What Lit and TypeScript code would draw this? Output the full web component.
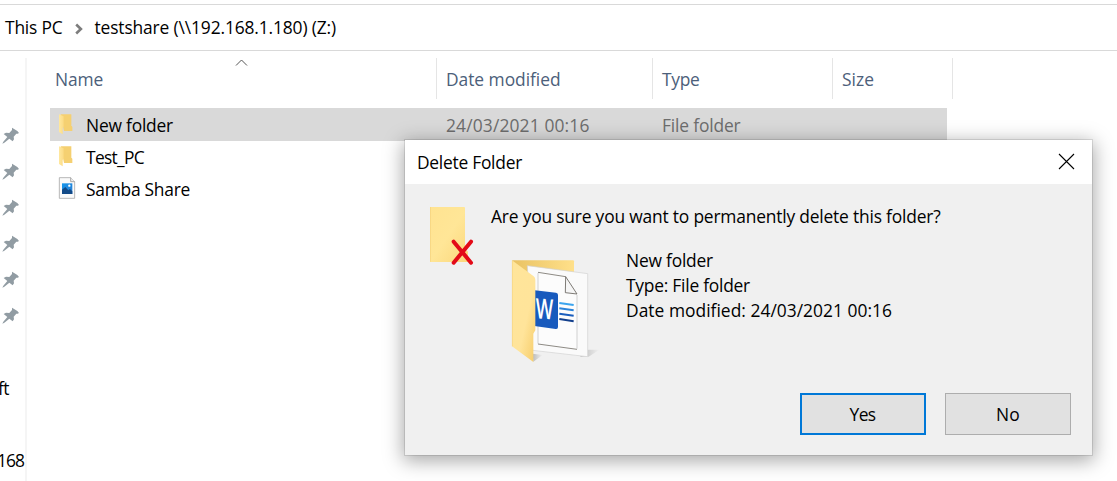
import { LitElement, html, css } from "lit";
import { customElement, property, query } from "lit/decorators.js";

/* A single line of text tracked so that it fills a known advance width. */
@customElement("ui-label")
class UiLabel extends LitElement {
  static styles = css`
    :host { display: block; white-space: pre; height: 24px; line-height: 24px; }
    .t { display: inline-block; }
  `;
  @property() text = "";
  @property({ type: Number }) fit = 0;
  @query(".t") span!: HTMLElement;
  updated() {
    const el = this.span;
    el.style.letterSpacing = "0px";
    if (!this.fit) return;
    const w = el.getBoundingClientRect().width;
    el.style.letterSpacing = `${(this.fit - w) / this.text.length}px`;
  }
  render() {
    return html`<span class="t">${this.text}</span>`;
  }
}

const label = (text: string, fit = 0) => html`<ui-label .text=${text} .fit=${fit}></ui-label>`;

const pin = html`<svg class="pin" viewBox="0 0 54 54" width="18" height="18">
  <path fill="#919ca3" d="M33 2 L38 5 L49 12 L54 18 L50 20 L46 20 L38 29 L39 37 L35 43 L25 35 L10 47 L4 50 L7 44 L19 30 L8 21 L15 17 L25 18 L33 9 Z"/>
</svg>`;

const folder = html`<svg viewBox="0 0 54 66" width="18" height="22">
  <defs><linearGradient id="s" x1="0" x2="1"><stop offset="0" stop-color="#ffe89f"/><stop offset="1" stop-color="#fbda83"/></linearGradient></defs>
  <path fill="#f5d071" d="M8 4 H40 V38 L43 41 V54 H18 Z"/>
  <path fill="url(#s)" d="M3 4 L17 10 V40 L14 45 V64 L3 57 Z"/>
</svg>`;

const picture = html`<svg viewBox="0 0 54 66" width="18" height="22">
  <defs><linearGradient id="p" x1="0" x2="1" y1="0" y2="1"><stop offset="0" stop-color="#1496ec"/><stop offset="1" stop-color="#2a7bd0"/></linearGradient></defs>
  <path fill="#fafafa" stroke="#aaa" stroke-width="2.5" d="M4 2 H38 L50 14 V64 H4 Z"/>
  <path fill="#eee" stroke="#999" stroke-width="2.5" d="M38 2 V14 H50"/>
  <path fill="url(#p)" d="M12 19 H43 V51 H12 Z"/>
  <path fill="#124a87" d="M12 38 L22 30 L31 40 L36 36 L43 43 V51 H12 Z"/>
  <circle cx="34" cy="26" r="3.5" fill="#fff"/>
</svg>`;

const deleteIcon = html`<svg viewBox="0 0 135 180" width="45" height="60">
  <defs><linearGradient id="d" x1="0" x2="1" y1="0" y2="1"><stop offset="0" stop-color="#ffe391"/><stop offset=".5" stop-color="#ffe697"/><stop offset="1" stop-color="#fbd77c"/></linearGradient></defs>
  <path fill="url(#d)" d="M0 3 H102 Q105 3 105 6 V128 L114 137 V168 H0 Z"/>
  <path fill="none" stroke="#f1cf78" stroke-width="2" d="M1 3 V167"/>
  <path fill="none" stroke="#e30a17" stroke-width="12" stroke-linecap="round" d="M71 107 L123 170 M123 107 L71 170"/>
</svg>`;

const bigFolder = html`<svg viewBox="30 20 270 330" width="90" height="110">
  <defs>
    <linearGradient id="b" x1="0" x2="1" y1="0" y2="0"><stop offset="0" stop-color="#e9c263"/><stop offset="1" stop-color="#ffe08a"/></linearGradient>
    <linearGradient id="f" x1="0" x2="1" y1="0" y2="1"><stop offset="0" stop-color="#ffe59a"/><stop offset=".6" stop-color="#ffe49a"/><stop offset="1" stop-color="#f6cc69"/></linearGradient>
    <linearGradient id="h" x1="0" x2="1"><stop offset="0" stop-color="#000" stop-opacity=".22"/><stop offset="1" stop-color="#000" stop-opacity="0"/></linearGradient>
  </defs>
  <path fill="url(#h)" d="M262 298 L298 298 L266 319 H240 Z"/>
  <path fill="url(#h)" d="M98 310 L128 314 L100 334 Z"/>
  <path fill="url(#b)" d="M36 30 H219 Q222 30 222 33 V120 H70 Z"/>
  <path fill="#fafafa" stroke="#d2d2d2" stroke-width="2" d="M82 46 L263 70 V319 L98 300 L90 200 Z"/>
  <path fill="#fcfcfc" d="M114 66 L197 79 L231 131 V297 L114 281 Z"/>
  <path fill="none" stroke="#d0d0d0" stroke-width="3" d="M114 68 V280 M231 134 V295"/>
  <path fill="none" stroke="#77746c" stroke-width="2.5" d="M114 66 L197 79 M114 281 L231 297"/>
  <path fill="#f6f6f6" stroke="#65625b" stroke-width="2.5" d="M197 79 L196 127 L231 131 Z"/>
  <g fill="none" stroke-width="6">
    <path stroke="#3ba4ee" d="M178 158 L221 164"/><path stroke="#2b83d9" d="M178 174 L221 180"/>
    <path stroke="#1a5dbd" d="M178 190 L221 196"/><path stroke="#123f8c" d="M178 206 L221 213"/>
  </g>
  <path fill="#185abd" d="M98 119 L168 127 Q174 128 174 134 V230 Q174 237 167 236 L98 226 Z"/>
  <text transform="matrix(.66 .05 0 1 107 204)" class="word">W</text>
  <path fill="url(#f)" d="M36 30 L101 78 Q106 82 106 88 V240 L100 250 V335 L36 288 Z"/>
  <path fill="none" stroke="#efcd78" stroke-width="1.5" d="M37 31 V288"/>
</svg>`;

@customElement("app-root")
class AppRoot extends LitElement {
  static styles = css`
    :host {
      display: block; position: relative; width: 1117px; height: 481px; overflow: hidden;
      background: #fff; color: #000; box-sizing: border-box; padding-top: 4px;
      font: 17.4px/24px "Open Sans", "Noto Sans", sans-serif;
    }
    * { box-sizing: border-box; }
    svg { display: block; flex: none; }
    .address {
      height: 47px; border-top: 1px solid #d9d9d9; border-bottom: 1px solid #d9d9d9;
      display: flex; padding: 10px 0 0 5px;
    }
    .chev { margin: 8px 12px 0 12px; }
    .body { display: flex; padding-top: 7px; height: 430px; }
    .side { width: 27px; height: 423px; border-right: 2px solid #f5f5f5; padding: 69px 0 0 1px; }
    .pin { margin-bottom: 18px; }
    .cut { display: flex; justify-content: flex-end; height: 24px; }
    .cut.a { margin: 51px 16px 48px 0; }
    .cut.b { margin-right: 1px; }
    .main { flex: 1; padding-left: 23px; }
    .cols, .row { display: grid; grid-template-columns: 387px 216px 180px 120px; }
    .cols { height: 41px; color: #4c607a; margin-bottom: 9px; width: 903px; }
    .col { border-right: 1px solid #e5e5e5; padding: 9px 0 0 9px; position: relative; }
    .col:first-child { padding-left: 5px; }
    .sort { position: absolute; left: 185px; top: 0; }
    .row { height: 32px; width: 897px; overflow: hidden; }
    .row.sel { background: #d9d9d9; height: 33px; margin-bottom: -1px; }
    .cell { padding: 5px 0 0 9px; color: #6d6d6d; }
    .cell.name { color: #000; padding: 5px 0 0 8px; display: flex; gap: 10px; }
    .dialog {
      position: absolute; left: 405px; top: 140px; width: 687px; height: 315px; background: #f0f0f0;
      box-shadow: 0 0 0 1px rgba(0,0,0,.1), 0 4px 18px 2px rgba(0,0,0,.34);
      display: flex; flex-direction: column;
    }
    .title { height: 44px; background: #fff; display: flex; justify-content: space-between; padding: 10px 17px 0 12px; }
    .close { margin-top: 3px; }
    .content { flex: 1; display: flex; padding: 20px 0 0 25px; }
    .content > svg { margin-top: 2px; }
    .text { padding-left: 16px; }
    .info { display: flex; padding: 19px 0 0 19px; }
    .info svg { margin-top: 10px; }
    .lines { padding: 1px 0 0 26px; display: grid; grid-auto-rows: 25px; }
    .word { font: 600 84px "Open Sans", sans-serif; fill: #fff; }
    .buttons { display: flex; justify-content: flex-end; gap: 19px; padding: 0 21px 20px 0; }
    .btn {
      width: 126px; height: 42px; border: 1px solid #adadad; background: #e1e1e1; padding: 8px 0 0;
      display: flex; justify-content: center; font: inherit; color: #000; align-items: flex-start;
    }
    .btn.def { border: 2px solid #0078d7; padding: 7px 1px 0 0; }
  `;

  row(icon: unknown, name: string, w: number, date = "", type = "") {
    return html`<div class="row ${date ? "sel" : ""}">
      <div class="cell name">${icon}${label(name, w)}</div>
      <div class="cell">${date ? label(date, 143.5) : ""}</div>
      <div class="cell">${type ? label(type, 78.5) : ""}</div>
    </div>`;
  }

  render() {
    return html`
      <div class="address">
        ${label("This PC", 57.5)}
        <svg class="chev" width="8" height="12" viewBox="0 0 8 12"><path d="M1.2 1.5 L5.9 6 L1.2 10.5" fill="none" stroke="#7d7d7d" stroke-width="2.6"/></svg>
        ${label("testshare (\\\\192.168.1.180) (Z:)", 241.5)}
      </div>
      <div class="body">
        <div class="side">
          ${[0, 1, 2, 3, 4, 5].map(() => pin)}
          <div class="cut a">${label("ft", 11)}</div>
          <div class="cut b">${label("168", 27)}</div>
        </div>
        <div class="main">
          <div class="cols">
            <div class="col">
              <svg class="sort" width="14" height="9" viewBox="0 0 14 9"><path d="M1 7.5 L6.5 2 L12 7.5" fill="none" stroke="#555" stroke-width="1"/></svg>
              ${label("Name", 48)}
            </div>
            <div class="col">${label("Date modified", 114.5)}</div>
            <div class="col">${label("Type", 37.5)}</div>
            <div class="col">${label("Size", 32)}</div>
          </div>
          ${this.row(folder, "New folder", 87, "24/03/2021 00:16", "File folder")}
          ${this.row(folder, "Test_PC", 58)}
          ${this.row(picture, "Samba Share", 104)}
        </div>
      </div>
      <div class="dialog">
        <div class="title">
          ${label("Delete Folder", 105)}
          <svg class="close" width="17" height="17" viewBox="0 0 17 17"><path d="M1 1 L16 16 M16 1 L1 16" stroke="#000" stroke-width="1.1"/></svg>
        </div>
        <div class="content">
          ${deleteIcon}
          <div class="text">
            ${label("Are you sure you want to permanently delete this folder?", 449.5)}
            <div class="info">
              ${bigFolder}
              <div class="lines">
                ${label("New folder", 87)}
                ${label("Type: File folder", 124)}
                ${label("Date modified: 24/03/2021 00:16", 266)}
              </div>
            </div>
          </div>
        </div>
        <div class="buttons">
          <button class="btn def">${label("Yes", 26)}</button>
          <button class="btn">${label("No", 24)}</button>
        </div>
      </div>`;
  }
}
